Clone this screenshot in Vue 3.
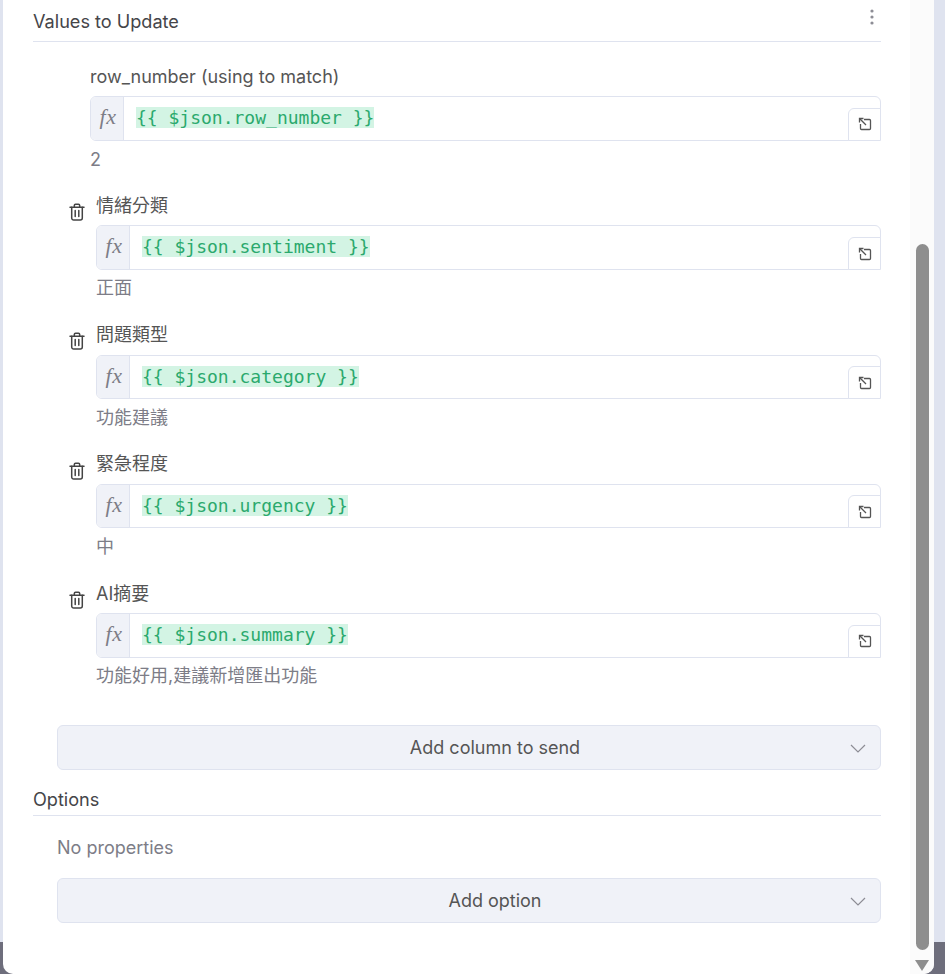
<script setup>
const rows = [
  { label: '情緒分類', expr: '{{ $json.sentiment }}', out: '正面' },
  { label: '問題類型', expr: '{{ $json.category }}', out: '功能建議' },
  { label: '緊急程度', expr: '{{ $json.urgency }}', out: '中' },
  { label: 'AI摘要', expr: '{{ $json.summary }}', out: '功能好用,建議新增匯出功能' },
]
</script>

<template>
  <div class="page">
    <div class="panel">
      <main class="content">
        <header class="section-title first">
          <span>Values to Update</span>
          <svg class="dots" width="4" height="16" viewBox="0 0 4 16"><circle cx="2" cy="2" r="1.6" /><circle cx="2" cy="8" r="1.6" /><circle cx="2" cy="14" r="1.6" /></svg>
        </header>

        <section class="param plain">
          <div class="body">
            <div class="label">row_number (using to match)</div>
            <div class="input">
              <div class="fx">fx</div>
              <div class="code"><span>{{ '{' + '{ $json.row_number }' + '}' }}</span></div>
              <button class="expand">
                <svg width="14" height="14" viewBox="0 0 14 14" fill="none"><path d="M1.5 5.5V1.5H5.5" /><path d="M1.8 1.8L8 8" /><path d="M6 2.5H11.5a1 1 0 0 1 1 1V11.5a1 1 0 0 1-1 1H3.5a1 1 0 0 1-1-1V7" /></svg>
              </button>
            </div>
            <div class="output">2</div>
          </div>
        </section>

        <section v-for="row in rows" :key="row.label" class="param">
          <svg class="trash" width="16" height="18" viewBox="0 0 16 18" fill="none"><path d="M1 4.2H15" /><path d="M5.3 4V2.4a1.2 1.2 0 0 1 1.2-1.2h3a1.2 1.2 0 0 1 1.2 1.2V4" /><path d="M2.7 4.2V15a2 2 0 0 0 2 2h6.6a2 2 0 0 0 2-2V4.2" /><path d="M6.2 7.5V13.5M9.8 7.5V13.5" /></svg>
          <div class="body">
            <div class="label">{{ row.label }}</div>
            <div class="input">
              <div class="fx">fx</div>
              <div class="code"><span>{{ row.expr }}</span></div>
              <button class="expand">
                <svg width="14" height="14" viewBox="0 0 14 14" fill="none"><path d="M1.5 5.5V1.5H5.5" /><path d="M1.8 1.8L8 8" /><path d="M6 2.5H11.5a1 1 0 0 1 1 1V11.5a1 1 0 0 1-1 1H3.5a1 1 0 0 1-1-1V7" /></svg>
              </button>
            </div>
            <div class="output">{{ row.out }}</div>
          </div>
        </section>

        <button class="add add-column">
          <span>Add column to send</span>
          <svg class="chev" width="16" height="9" viewBox="0 0 16 9" fill="none"><path d="M1 1L8 8L15 1" /></svg>
        </button>

        <header class="section-title options"><span>Options</span></header>
        <div class="none">No properties</div>
        <button class="add">
          <span>Add option</span>
          <svg class="chev" width="16" height="9" viewBox="0 0 16 9" fill="none"><path d="M1 1L8 8L15 1" /></svg>
        </button>
      </main>
      <aside class="scrollbar">
        <div class="thumb"></div>
        <div class="arrow"></div>
      </aside>
    </div>
  </div>
</template>

<style>
html, body { margin: 0; padding: 0; overflow: hidden; }
</style>

<style scoped>
.page {
  width: 945px;
  height: 974px;
  overflow: hidden;
  background: linear-gradient(#dfe3ef 0 942px, #6e6e7c 942px);
  font-family: Inter, "Noto Sans CJK TC", sans-serif;
  font-size: 18px;
  color: #555;
}
.panel {
  width: 931px;
  height: 974px;
  margin-left: 3px;
  display: flex;
  background: #fff;
  border-radius: 0 0 10px 10px;
  overflow: hidden;
}
.content {
  width: 907px;
  flex: none;
  box-sizing: border-box;
  padding: 0 29px 0 30px;
}
.scrollbar {
  flex: 1;
  background: #fbfbfb;
  padding: 244px 0 0 6px;
}
.thumb {
  width: 13px;
  height: 706px;
  background: #8e8e8e;
  border-radius: 7px;
}
.arrow {
  width: 0;
  height: 0;
  margin: 10px 0 0 -1px;
  border-left: 7.5px solid transparent;
  border-right: 7.5px solid transparent;
  border-top: 11px solid #8e8e8e;
}
.section-title {
  display: flex;
  justify-content: space-between;
  border-bottom: 1px solid #dfe3ef;
  color: #454549;
  font-size: 18.12px;
  line-height: 22px;
}
.first {
  height: 41px;
  align-items: flex-start;
}
.first span { margin-top: 10px; }
.dots { margin: 9px 7px 0 0; fill: #8d8d95; }
.param {
  display: flex;
  height: 129.2px;
  padding-left: 36px;
}
.param.plain {
  padding-left: 57px;
  margin-top: 23px;
  height: 129px;
}
.trash {
  flex: none;
  margin: 9.2px 11px 0 0;
  stroke: #444;
  stroke-width: 1.5;
  stroke-linecap: round;
  stroke-linejoin: round;
}
.body { flex: 1; min-width: 0; }
.label {
  height: 31.4px;
  line-height: 24px;
  color: #555;
}
.plain .label { height: 31px; }
.input {
  position: relative;
  display: flex;
  height: 44.67px;
  box-sizing: border-box;
  border: 1px solid #dfe3ef;
  border-radius: 6px;
  background: #fff;
}
.fx {
  width: 33px;
  flex: none;
  box-sizing: border-box;
  padding-left: 2px;
  border-right: 1px solid #dfe3ef;
  background: #f0f2f8;
  border-radius: 5px 0 0 5px;
  text-align: center;
  font-family: "Liberation Serif", serif;
  font-style: italic;
  font-size: 22px;
  letter-spacing: 0.5px;
  line-height: 40px;
  color: #7d7d87;
}
.code {
  flex: 1;
  padding-left: 12px;
  font-family: "DejaVu Sans Mono", monospace;
  font-size: 18px;
  line-height: 41px;
  color: #2ba96d;
}
.code span { background: #d3f4e4; }
.expand {
  position: absolute;
  right: -1px;
  bottom: -1px;
  width: 33px;
  height: 33px;
  padding: 0;
  box-sizing: border-box;
  display: flex;
  align-items: center;
  justify-content: center;
  background: #fff;
  border: 1px solid #dfe3ef;
  border-radius: 6px 0 0 0;
}
.expand svg { stroke: #555; stroke-width: 1.3; }
.output {
  margin-top: 6.3px;
  line-height: 24px;
  color: #7d7d87;
}
.plain .output { margin-top: 7px; }
.add {
  position: relative;
  display: block;
  width: 824px;
  height: 45px;
  box-sizing: border-box;
  padding: 0 0 0 52px;
  margin-left: 24px;
  background: #f0f2f8;
  border: 1px solid #dfe3ef;
  border-radius: 6px;
  font: inherit;
  color: #555;
  text-align: center;
}
.add-column { margin-top: 14.2px; }
.chev {
  position: absolute;
  right: 14px;
  top: 18px;
  stroke: #8d8d95;
  stroke-width: 1.2;
}
.options {
  margin-top: 18px;
  height: 27px;
}
.none {
  margin: 20px 0 18px 24px;
  line-height: 24px;
  color: #7d7d87;
}
</style>
